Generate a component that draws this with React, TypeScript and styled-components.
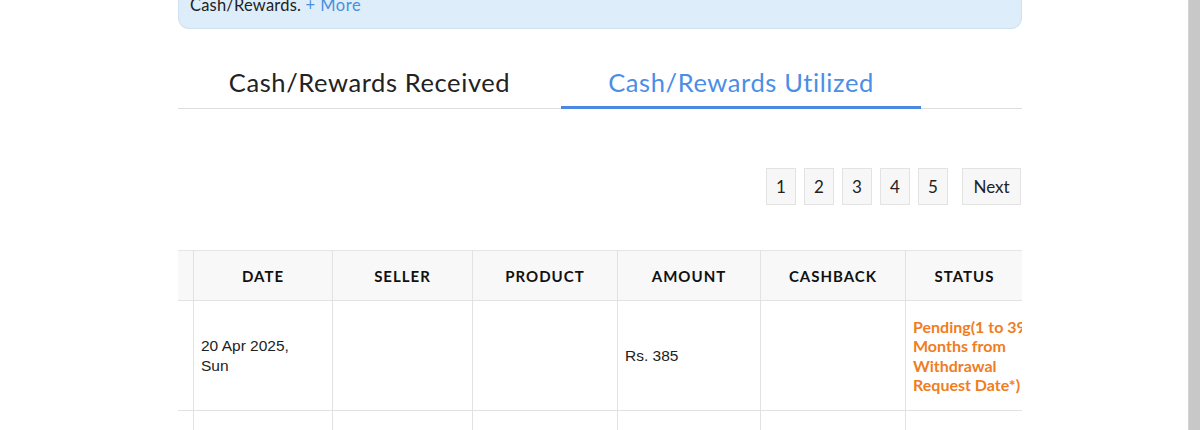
import React, { useEffect, useRef } from "react";
import styled, { createGlobalStyle } from "styled-components";

const Global = createGlobalStyle`
  html, body { margin: 0; padding: 0; overflow: hidden; }
  html { background: #fff; }
  body { font-family: "Lato", "Noto Sans", sans-serif; color: #222; background: transparent; }
  * { box-sizing: border-box; }
`;

const Page = styled.div`
  display: flex;
  width: 100vw;
  height: 430px;
  overflow: hidden;
  background: linear-gradient(to left, #c8c8c8 0, #c8c8c8 11px, #d4d4d4 11px, #d4d4d4 12px, #fff 12px);
`;

const Main = styled.div`
  flex: 1;
  min-width: 0;
`;

const ScrollStrip = styled.div`
  flex: 0 0 12px;
  align-self: stretch;
  background: #c8c8c8;
  box-shadow: inset 1px 0 0 #d4d4d4;
`;

const Container = styled.div`
  width: 844px;
  margin-left: 178px;
`;

const InfoBox = styled.div`
  background: #deedfa;
  border: 1px solid #cfe0f0;
  border-top: none;
  border-radius: 0 0 11px 11px;
  padding: 0 11px;
  height: 29px;
  overflow: hidden;
`;

const InfoText = styled.p`
  margin: -5px 0 0;
  font-size: 16.5px;
  line-height: 20px;
  letter-spacing: 0.2px;
  color: #222;
`;

const MoreLink = styled.a`
  color: #4a8fdb;
  text-decoration: none;
  letter-spacing: 0.5px;
`;

const Tabs = styled.div`
  display: flex;
  margin-top: 30px;
  border-bottom: 1px solid #dedede;
`;

const Tab = styled.div<{ $active?: boolean; $w: number }>`
  width: ${(p) => p.$w}px;
  text-align: center;
  font-size: 25.5px;
  line-height: 30px;
  padding: 8px 0 9px;
  color: ${(p) => (p.$active ? "#4b8ee6" : "#222")};
  border-bottom: 3px solid ${(p) => (p.$active ? "#4b89e0" : "transparent")};
  margin-bottom: -1px;
  letter-spacing: 0.6px;
`;

const Pager = styled.div`
  display: flex;
  justify-content: flex-end;
  gap: 8px;
  margin-top: 59px;
  padding-right: 1px;
`;

const PageBtn = styled.div<{ $wide?: boolean }>`
  height: 37px;
  min-width: ${(p) => (p.$wide ? "59px" : "30px")};
  margin-left: ${(p) => (p.$wide ? "6px" : "0")};
  padding: 0 6px;
  display: flex;
  align-items: center;
  justify-content: center;
  background: #f7f7f7;
  border: 1px solid #e3e3e3;
  font-size: 17px;
  color: #222;
`;

const TableWrap = styled.div`
  margin-top: 45px;
  width: 844px;
  overflow: hidden;
`;

const Table = styled.table`
  border-collapse: collapse;
  table-layout: fixed;
  width: 950px;
  background: #fff;
`;

const Th = styled.th`
  height: 50px;
  background: #f8f8f8;
  border: 1px solid #e2e2e2;
  border-top: 1px solid #e6e6e6;
  font-size: 15px;
  font-weight: 700;
  letter-spacing: 1px;
  color: #111;
  text-align: center;
  padding: 0 8px;
`;

const Td = styled.td<{ $status?: boolean }>`
  height: 110px;
  border: 1px solid #e2e2e2;
  padding: 0 7px;
  vertical-align: middle;
  font-family: ${(p) => (p.$status ? `"Lato", "Noto Sans", sans-serif` : `"Liberation Sans", Arial, sans-serif`)};
  font-size: ${(p) => (p.$status ? "16px" : "15.5px")};
  font-weight: ${(p) => (p.$status ? 700 : 400)};
  line-height: 19.4px;
  color: ${(p) => (p.$status ? "#f07d1f" : "#222")};
  white-space: ${(p) => (p.$status ? "nowrap" : "normal")};
`;

const cols = [120, 139, 140, 145, 143, 145, 118];

export default function App() {
  const wrap = useRef<HTMLDivElement>(null);
  useEffect(() => {
    if (wrap.current) wrap.current.scrollLeft = 105;
  }, []);
  return (
    <>
      <Global />
      <Page>
        <Main>
          <Container>
            <InfoBox>
              <InfoText>
                Cash/Rewards. <MoreLink href="#">+ More</MoreLink>
              </InfoText>
            </InfoBox>
            <Tabs>
              <Tab $w={383}>Cash/Rewards Received</Tab>
              <Tab $w={360} $active>
                Cash/Rewards Utilized
              </Tab>
            </Tabs>
            <Pager>
              {["1", "2", "3", "4", "5"].map((n) => (
                <PageBtn key={n}>{n}</PageBtn>
              ))}
              <PageBtn $wide>Next</PageBtn>
            </Pager>
            <TableWrap ref={wrap}>
              <Table>
                <colgroup>
                  {cols.map((w, i) => (
                    <col key={i} style={{ width: w }} />
                  ))}
                </colgroup>
                <thead>
                  <tr>
                    <Th>S.NO</Th>
                    <Th>DATE</Th>
                    <Th>SELLER</Th>
                    <Th>PRODUCT</Th>
                    <Th>AMOUNT</Th>
                    <Th>CASHBACK</Th>
                    <Th>STATUS</Th>
                  </tr>
                </thead>
                <tbody>
                  <tr>
                    <Td>1</Td>
                    <Td>
                      20 Apr 2025,
                      <br />
                      Sun
                    </Td>
                    <Td></Td>
                    <Td></Td>
                    <Td>Rs. 385</Td>
                    <Td></Td>
                    <Td $status>
                      Pending(1 to 39
                      <br />
                      Months from
                      <br />
                      Withdrawal
                      <br />
                      Request Date*)
                    </Td>
                  </tr>
                  <tr>
                    <Td>2</Td>
                    <Td></Td>
                    <Td></Td>
                    <Td></Td>
                    <Td></Td>
                    <Td></Td>
                    <Td></Td>
                  </tr>
                </tbody>
              </Table>
            </TableWrap>
          </Container>
        </Main>
        <ScrollStrip />
      </Page>
    </>
  );
}
